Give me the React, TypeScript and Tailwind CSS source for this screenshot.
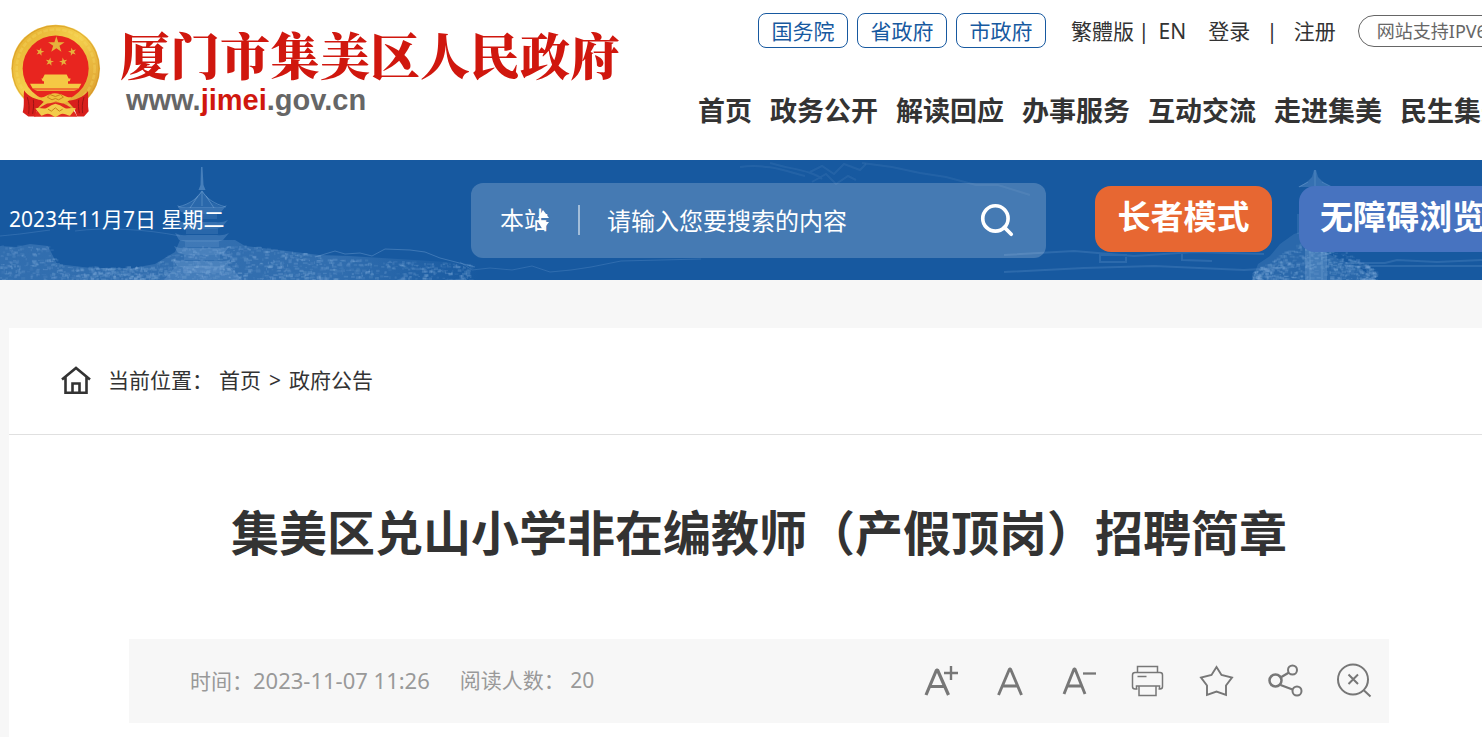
import type { ReactNode } from "react";
import { Search } from "lucide-react";

const NAV = ["首页", "政务公开", "解读回应", "办事服务", "互动交流", "走进集美", "民生集美"];
const LEVELS = ["国务院", "省政府", "市政府"];

function star(cx: number, cy: number, r: number, rot = 0) {
  return Array.from({ length: 10 }, (_, i) => {
    const a = ((i * 36 - 90 + rot) * Math.PI) / 180;
    const d = i % 2 ? r * 0.38 : r;
    return `${(cx + d * Math.cos(a)).toFixed(1)},${(cy + d * Math.sin(a)).toFixed(1)}`;
  }).join(" ");
}

function Emblem() {
  return (
    <svg viewBox="30 40 276 290" className="h-[97px] w-[92px] shrink-0" aria-hidden="true">
      <defs>
        <linearGradient id="gold" x1="0" y1="0" x2="1" y2="1">
          <stop offset="0" stopColor="#e3a92a" />
          <stop offset="0.45" stopColor="#f4cf4c" />
          <stop offset="1" stopColor="#d9952a" />
        </linearGradient>
      </defs>
      <ellipse cx="167" cy="176" rx="133" ry="131" fill="url(#gold)" />
      <ellipse cx="167" cy="176" rx="117" ry="117" fill="none" stroke="#f9df6a" strokeWidth="8" strokeDasharray="14 5" opacity="0.3" />
      <ellipse cx="167" cy="176" rx="130" ry="128" fill="none" stroke="#c98a20" strokeWidth="3" opacity="0.5" />
      <ellipse cx="167" cy="176" rx="99" ry="99" fill="#e8251f" />
      <g fill="#e6b23c">
        <polygon points={star(169, 105, 26)} />
        <polygon points={star(120, 126, 13, 15)} />
        <polygon points={star(217, 126, 13, -15)} />
        <polygon points={star(149, 156, 13, 10)} />
        <polygon points={star(190, 156, 13, -10)} />
      </g>
      <g fill="#f5c944">
        <path d="M134 194h66l6 12h-78zM124 206h88l-3 8h-81zM132 213h72v9h-72zM90 222h154l-8 14H98z" />
        <path d="M100 239h134l-12 4H112z" />
      </g>
      <path d="M72 241c12 20 38 29 63 31l-22 23-7 25-21 0-17-13c6-20 2-42 4-62zM264 244c-14 18-38 27-63 29l21 22 10 25 20 0 14-16c-4-20 0-40-2-60z" fill="#d81f1c" />
      <path d="M82 262c6 18 6 32 4 50M100 270c2 14 0 28-2 42M252 262c-6 18-6 32-4 48M236 270c-2 14 0 28 2 40" stroke="#9d1414" strokeWidth="3" fill="none" />
      <path d="M102 321c6-20 28-44 64-44s58 24 66 44z" fill="#e02a20" />
      <path d="M118 262c14 4 24-10 46-12 24 0 32 14 50 12-8 14-20 18-30 18l-16-6-18 6c-14 0-26-6-32-18z" fill="#efc03c" />
      <path d="M106 296c16-4 28 4 38-4l10-6 12-4 14 4 10 6c10 8 20 0 38 4l-18 22c-12-4-22-10-30-4l-14 8-14-8c-10-6-18 0-28 4z" fill="#f3cc4c" />
      <path d="M142 262l8-8 16 6 16-6 8 8-14 8-10-4-10 4zM144 298l10 6 12-10 12 10 10-6" fill="none" stroke="#c9821c" strokeWidth="3" />
    </svg>
  );
}

function makeRandom(seed: number) {
  let s = seed;
  return () => {
    s = (s * 16807) % 2147483647;
    return s / 2147483647;
  };
}

type Speck = { x: number; y: number; w: number; h: number; o: number };

function specks(seed: number, n: number, x0: number, x1: number, top: (x: number) => number): Speck[] {
  const rnd = makeRandom(seed);
  return Array.from({ length: n }, () => {
    const x = x0 + rnd() * (x1 - x0);
    const t = top(x);
    return { x, y: t + rnd() * (120 - t), w: 1 + rnd() * 4, h: 1 + rnd() * 2, o: 0.08 + rnd() * 0.18 };
  });
}

const CITY = specks(7, 1000, 0, 330, (x) => {
  if (x < 48) return 85;
  if (x < 62) return 85 + (x - 48) * 1.5;
  if (x < 150) return 106;
  if (x < 180) return 106 - (x - 150) * 0.6;
  if (x < 240) return 86;
  return 84 + (x - 240) * 0.14;
});
const TOWN = specks(31, 260, 330, 470, (x) => 98 + (x - 330) * 0.04);
const TREE = specks(91, 600, 1252, 1375, (x) => (x < 1315 ? 112 - (x - 1252) * 0.65 : 72 + (x - 1315) * 0.65));
const TIERS = [45, 60, 73, 86, 99];

function Scenery() {
  return (
    <svg viewBox="0 0 1482 120" preserveAspectRatio="xMinYMin slice" className="absolute inset-0 h-full w-full" aria-hidden="true">
      <defs>
        <linearGradient id="shore" x1="0" x2="1">
          <stop offset="0" stopColor="#8fb8e4" />
          <stop offset="0.7" stopColor="#8fb8e4" />
          <stop offset="1" stopColor="#8fb8e4" stopOpacity="0" />
        </linearGradient>
      </defs>
      <path opacity="0.22" fill="url(#shore)" d="M0 86l16 1 14-3 18 2 9 18 34 4h42l22-4 20-12 5-12h55l10 6 74 9 30 1 130 8v16H0z" />
      <g fill="#8fb8e4">
        {[...CITY, ...TOWN, ...TREE].map((s, i) => (
          <rect key={i} x={s.x} y={s.y} width={s.w} height={s.h} opacity={s.o} />
        ))}
        <path opacity="0.4" d="M201 7h1.500l1 18 2 5h-7l2-5z" />
        <path opacity="0.16" d="M202 30l9 12 14 6H178l14-6z" />
        {TIERS.map((y, i) => (
          <g key={y} opacity="0.26">
            <path d={`M${177 - i} ${y}q6 3 12 2h${26 + i * 2}q6 1 12-2l-6 7-6 2h-${26 + i * 2}l-8-2z`} />
            <path d={`M${187 - i} ${y + 8}h${30 + i * 2}v6h-${30 + i * 2}z`} opacity="0.6" />
          </g>
        ))}
        <path opacity="0.2" d="M176 106h54l12 14h-78z" />
        <path opacity="0.25" d="M1314 10h2l2 7 6 6 8 4h-34l9-5 5-5zM1305 68h22v52h-22z" />
      </g>
      <g fill="none" stroke="#8fb8e4">
        <path opacity="0.4" d="M202 31c-4 7-12 13-24 16M202 31c4 7 12 13 24 16M202 32v14M198 36l-8 12M206 36l8 12" />
        <path opacity="0.2" d="M0 76l20-2 30-4M75 71c30-4 70-2 105 5" />
        <path opacity="0.32" d="M315 97l20-6 10 3 15-1 12 3 13-7 25 1 15 2 15 6 35 9" />
        <path opacity="0.2" d="M460 102l12 8 18-2 22 2 20-4 18 6 21-2 20-3 30-6 80-2" />
        <path opacity="0.1" strokeWidth="2" d="M740 7c30-4 50 6 65 9M770 3c20 6 44 8 52 16M810 12l12-6 12 8 10-10 16 6 6-6M812 22l14-8 10 10 12-8 8 4" />
        <path opacity="0.1" strokeWidth="2" d="M862 3l30 4 28 6 26 4 30 8h22l32 10" />
        <path opacity="0.18" strokeWidth="2" d="M1004 95l70-4 60 5 60-4 70 2M1004 112l80-4 70-2 90 4 50-3M1345 106h137M1345 103h40l12-3 40 2 45-2M1100 95v7h26v-7zM1182 94v6l30 1" />
        <path opacity="0.3" d="M1315 10v16M1308 22l-9 5M1322 22l10 5M1298 54v20M1310 70v50M1322 70v50" />
      </g>
      <path opacity="0.16" fill="#8fb8e4" d="M1252 120l6-16 12-8 10-12 14-10 12-4 14 10 8 14 18 8 14 6 16 12z" />
    </svg>
  );
}

function Tool({ label, children }: { label: string; children: ReactNode }) {
  return (
    <button type="button" aria-label={label} className="text-[#777]">
      <svg viewBox="0 0 36 36" className="h-9 w-9" fill="none" stroke="currentColor" strokeWidth="2">
        {children}
      </svg>
    </button>
  );
}

export default function App() {
  return (
    <div className="min-h-screen overflow-x-hidden bg-[#f7f7f7] font-['Noto_Sans','Noto_Sans_CJK_SC',sans-serif] text-[#333]">
      <header className="bg-white">
        <div className="flex h-[160px] w-full min-w-[1500px] items-start pl-[10px]">
          <a href="#home" className="flex w-[688px] shrink-0 gap-[18px] pt-[23px]">
            <Emblem />
            <div>
              <div className="whitespace-nowrap font-['Noto_Serif_CJK_SC','Noto_Sans_CJK_SC',serif] text-[50px] leading-[60px] font-black text-[#d0170e]">
                厦门市集美区人民政府
              </div>
              <div className="pl-[6px] font-['Liberation_Sans',sans-serif] text-[29px] leading-[34px] font-bold text-[#666]">
                www.<span className="text-[#d0170e]">jimei</span>.gov.cn
              </div>
            </div>
          </a>
          <div className="shrink-0 whitespace-nowrap">
            <div className="flex h-[61px] items-center pl-[60px] text-[21px] leading-8">
              <div className="flex gap-[9px]">
                {LEVELS.map((t) => (
                  <a key={t} href="#gov" className="flex h-[35px] w-[90px] items-center justify-center rounded-lg border border-[#1759a0] text-[#1759a0]">
                    {t}
                  </a>
                ))}
              </div>
              <a href="#hant" className="ml-[25px] font-['Noto_Sans','Noto_Sans_CJK_TC',sans-serif]">繁體版</a>
              <span className="ml-1">|</span>
              <a href="#en" className="ml-[9px]">EN</a>
              <a href="#login" className="ml-[22px]">登录</a>
              <span className="ml-4">|</span>
              <a href="#register" className="ml-4">注册</a>
              <a href="#ipv6" className="ml-[22px] flex h-8 items-center rounded-full border border-[#666] px-[18px] text-[18px] text-[#666]">
                网站支持IPV6
              </a>
            </div>
            <nav className="flex gap-[18px] pt-[30px] text-[27px] leading-10 font-bold">
              {NAV.map((t) => (
                <a key={t} href="#nav">{t}</a>
              ))}
            </nav>
          </div>
        </div>
      </header>

      <section className="relative h-[120px] bg-[#1759a0] text-white">
        <Scenery />
        <div className="relative flex h-full min-w-[1500px] items-center pl-[9px]">
          <time className="w-[462px] shrink-0 text-[21px]">2023年11月7日 星期二</time>
          <form className="flex h-[75px] w-[575px] shrink-0 items-center rounded-xl bg-white/20 pr-[30px] pl-[29px] text-[24px]">
            <div className="relative flex items-center">
              <select aria-label="搜索范围" className="h-10 w-[78px] appearance-none bg-transparent text-white">
                <option>本站</option>
              </select>
              <svg viewBox="0 0 12 22" className="pointer-events-none absolute left-[37px] h-[22px] w-3" fill="currentColor" aria-hidden="true">
                <path d="M1 9l5-8 6 8zM1 13h11l-6 8z" />
              </svg>
            </div>
            <div className="h-[30px] w-0.5 bg-white/50" />
            <input
              aria-label="搜索内容"
              placeholder="请输入您要搜索的内容"
              className="ml-[27px] h-10 min-w-0 flex-1 bg-transparent text-white outline-none placeholder:text-white"
            />
            <button type="submit" aria-label="搜索">
              <Search size={38} strokeWidth={2.3} />
            </button>
          </form>
          <div className="ml-[49px] flex shrink-0 gap-[27px] pb-[2px] text-[33px] leading-[62px] font-bold whitespace-nowrap">
            <button type="button" className="h-[66px] w-[177px] rounded-2xl bg-[#e76732] pb-1">
              长者模式
            </button>
            <button type="button" className="h-[66px] rounded-2xl bg-[#4773c0] px-[21px] pb-1">
              无障碍浏览
            </button>
          </div>
        </div>
      </section>

      <main className="mt-12 ml-[9px] min-w-[1500px] bg-white">
        <div className="flex h-[107px] items-center border-b border-[#e0e0e0] pl-[51px] text-[21px]">
          <svg viewBox="0 0 32 32" className="h-8 w-8" fill="none" stroke="currentColor" strokeWidth="2.600" aria-hidden="true">
            <path d="M2 14.500L16 3l14 11.500M5.500 12v15.700h21V12M12.500 27V18.500h7V27" />
          </svg>
          <span className="ml-4">当前位置：</span>
          <a href="#home" className="ml-[6px]">首页</a>
          <span className="mx-2">&gt;</span>
          <a href="#notice">政府公告</a>
        </div>
        <article className="px-[120px] pt-[62px]">
          <h1 className="text-center text-[48px] leading-[72px] font-bold">集美区兑山小学非在编教师（产假顶岗）招聘简章</h1>
          <div className="mt-[70px] flex h-[84px] items-center justify-between bg-[#f7f7f7] pr-4 pl-[61px] text-[21px] text-[#999]">
            <div className="flex items-center gap-[30px]">
              <span>
                时间：<time className="text-[22px]">2023-11-07 11:26</time>
              </span>
              <span>阅读人数： 20</span>
            </div>
            <div className="flex items-center gap-[33px]">
              <Tool label="放大字号">
                <path strokeWidth="3.200" strokeLinejoin="bevel" d="M3 32L13.500 7h1L25.500 32M7 23.500h14" />
                <path strokeWidth="2.400" d="M21 10h14M28 3v14" />
              </Tool>
              <Tool label="默认字号">
                <path strokeWidth="2.900" strokeLinejoin="bevel" d="M6.500 32L17.500 6h1L29.500 32M10.500 23h15" />
              </Tool>
              <Tool label="缩小字号">
                <path strokeWidth="2.900" strokeLinejoin="bevel" d="M3 31L13 6h1L24 31M6.500 23h14" />
                <path strokeWidth="2.300" d="M22 10.500h13" />
              </Tool>
              <Tool label="打印">
                <path strokeWidth="1.500" d="M7.500 9V3.500h20V9M7.500 26H5Q2.500 26 2.500 23.500V12q0-2.500 2.500-2.500h25Q32.500 9.500 32.500 12v11.500q0 2.500-2.500 2.500H28.500M6.500 26v-3h23v3M9 23v9.500h17V23M7.500 13.500h9" />
              </Tool>
              <Tool label="收藏">
                <path strokeWidth="1.900" d="M17.500 4L22.500 12 33 14.500 27 22.500V32L17.500 28.500 8 32V22.500L2 14.500 12.500 12z" />
              </Tool>
              <Tool label="分享">
                <circle cx="7.500" cy="17.500" r="6" strokeWidth="2.500" />
                <circle cx="24.500" cy="7" r="4.500" />
                <circle cx="29" cy="28" r="4.500" />
                <path strokeWidth="2.300" d="M12.500 14.500l8.500-5M12.500 22l12 4.500" />
              </Tool>
              <Tool label="关闭">
                <circle cx="16" cy="16.500" r="15" />
                <path d="M26.500 27L33.500 33.500M11.500 11.500l9.500 9.500M21 11.500L11.500 21" />
              </Tool>
            </div>
          </div>
          <div className="h-4" />
        </article>
      </main>
    </div>
  );
}
